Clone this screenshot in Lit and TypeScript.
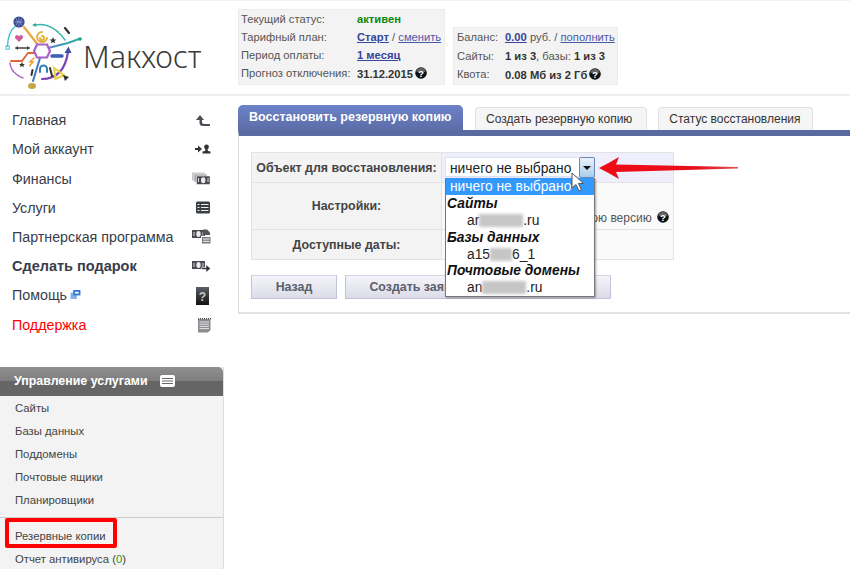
import { LitElement, html, css, svg } from "lit";
import { customElement } from "lit/decorators.js";

const bill = (x: number, y: number) => svg`<rect x="${x}" y="${y}" width="13" height="8" fill="#484b50"/><ellipse cx="${x + 6.5}" cy="${y + 4}" rx="2.2" ry="3" fill="#eee"/><path d="M${x + 2} ${y + 2} v4 M${x + 11} ${y + 2} v4" stroke="#ddd"/>`;

const navIcon = (name: string) => {
  const m: Record<string, unknown> = {
    home: svg`<path d="M5 8 L9 3 L13 8 H11 V10 Q11 12 13 12 H19 V14 H12 Q8.5 14 8.5 11 V8 Z" fill="#4a5058"/>`,
    acct: svg`<path d="M4 7 H7 V4.5 L11 8 L7 11.5 V9 H4 Z" fill="#333"/><circle cx="15.5" cy="6" r="2.4" fill="#333"/><path d="M14.5 8 H16.5 L17 10 L19.5 10.5 V12.5 H11.5 V10.5 L14 10 Z" fill="#333"/>`,
    money: svg`<rect x="1" y="2.5" width="13" height="8" fill="#c4c4c4"/><rect x="3" y="4" width="13" height="8" fill="#a8a8a8" stroke="#fff" stroke-width=".5"/><rect x="5.5" y="6" width="13.5" height="8.5" fill="#484b50" stroke="#fff" stroke-width=".5"/><ellipse cx="12.2" cy="10.2" rx="2.2" ry="3" fill="#eee"/><path d="M7.5 8 v4 M17 8 v4" stroke="#ddd"/>`,
    list: svg`<rect x="5" y="2.5" width="14" height="12" rx="1.5" fill="#3a3d42"/><path d="M10 5.5 H17.5 M10 8.5 H17.5 M10 11.5 H17.5 M6.5 5.5 H8.5 M6.5 8.5 H8.5 M6.5 11.5 H8.5" stroke="#eee" stroke-width="1.2"/>`,
    partner: svg`${bill(1, 2)}<path d="M12 1.5 H16 L19 4.5 V7 H12 Z" fill="#555"/><rect x="10" y="8" width="9.5" height="7.5" fill="#fff"/><rect x="11" y="9" width="8.5" height="6.5" fill="#777"/><path d="M12 11 H18.5 M12 13.3 H18.5" stroke="#fff"/>`,
    gift: svg`${bill(1, 3)}<path d="M10.5 9.5 H15 V6.5 L19.5 10.5 L15 14.5 V11.5 H10.5 Z" fill="#333" stroke="#fff" stroke-width=".6"/>`,
    help: svg`<defs><linearGradient id="hg" x1="0" y1="0" x2="0" y2="1"><stop offset="0" stop-color="#5c6066"/><stop offset="1" stop-color="#111"/></linearGradient></defs><rect x="5" y="0" width="13" height="18" fill="url(#hg)"/><text x="11.5" y="13.5" text-anchor="middle" class="q">?</text>`,
    note: svg`<path d="M7 3 H19.5 V14 L17 16.5 H7 Z" fill="#8a8c90"/><path d="M8.5 6 H18 M8.5 8.2 H18 M8.5 10.4 H18 M8.5 12.6 H18" stroke="#eee" stroke-width=".9"/><path d="M7 2.6 h13" stroke="#444" stroke-width="1.2" stroke-dasharray="1 1"/>`,
  };
  return html`<svg class="ni" width="20" height="17" viewBox="0 0 20 17">${m[name]}</svg>`;
};

const hint = html`<svg class="hint" width="12" height="12" viewBox="0 0 13 13"><circle cx="6.5" cy="6.5" r="6.3" fill="#111"/><path d="M1.5 5 A5 4 0 0 1 11.5 5 Q6.5 8 1.5 5 Z" fill="#666"/><text x="6.5" y="10.3" text-anchor="middle" fill="#fff" font-size="10" font-weight="700" font-family="Liberation Sans">?</text></svg>`;

const logo = html`<svg class="logo-mark" width="84" height="93" viewBox="0 0 84 93" fill="none" stroke-linecap="round">
  <defs>
    <linearGradient id="lg1" x1="0" y1="0" x2="1" y2="0"><stop offset="0" stop-color="#5b7fd0"/><stop offset="1" stop-color="#25b5a0"/></linearGradient>
  </defs>
  <path d="M15.5 25 Q8 31 7.5 45" stroke="#45bdd0" stroke-width="1.4"/>
  <rect x="6" y="45" width="3.2" height="3.2" stroke="#45bdd0"/>
  <circle cx="19" cy="21" r="5.6" fill="#39498f"/>
  <path d="M15 21 H23 M19 17 V25 M16.5 18 Q19 21 16.5 24 M21.5 18 Q19 21 21.5 24" stroke="#a9b6e0" stroke-width=".6"/>
  <path d="M24 26 L38 44" stroke="#efa43a" stroke-width="2.2"/>
  <path d="M35 24 Q52 21 65 39" stroke="#2fb3a8" stroke-width="1.5" stroke-dasharray="1.6 1.1"/>
  <path d="M32 24 L36 22 V26 Z" fill="#2fa8a0"/>
  <path d="M65 27 L69 32" stroke="#333" stroke-width="2.2"/>
  <path d="M47 37 A5 5 0 1 1 42 31 M42 35 A2 2 0 1 1 40 37 " stroke="#e3b23c" stroke-width="2"/>
  <path d="M53 36 L54 38.5 L56.5 38.5 L54.5 40 L55.2 42.5 L53 41 L50.8 42.5 L51.5 40 L49.5 38.5 L52 38.5 Z" fill="#333"/>
  <path d="M19 41 L15 37 Q15 34 17 34 Q18.5 34 19 35.5 Q19.5 34 21 34 Q23 34 23 37 Z" fill="#cf5aa0"/>
  <path d="M16 47 H29" stroke="#444" stroke-width="1.6"/>
  <path d="M15 47 L18 45 V49 Z M30 47 L27 45 V49 Z" fill="#444"/>
  <path d="M48 47 L68 42 L79 38" stroke="url(#lg1)" stroke-width="2"/>
  <circle cx="80" cy="38" r="1.8" fill="#1f9f8f"/>
  <path d="M37 52 H28 L22 60 H11" stroke="#e2653f" stroke-width="1.8"/>
  <path d="M10 62 Q11 72 23 77" stroke="#a764bd" stroke-width="1.5" stroke-dasharray="1.5 1.1"/>
  <path d="M52 55 H62" stroke="#3d5fb5" stroke-width="3.4" stroke-dasharray="2 1"/>
  <path d="M40 57 L33 80" stroke="#3f78c0" stroke-width="2"/>
  <ellipse cx="32" cy="85" rx="4" ry="3" fill="#c7a64a"/>
  <polygon points="37,43.5 47,43.5 50,50 47,56.5 37,56.5 34,50" fill="#fff" stroke="#a860c4" stroke-width="2.2"/>
  <path d="M42 78 Q64 78 68 51" stroke="#7a46b4" stroke-width="2.2"/>
  <path d="M64.5 52 L68.5 45.5 L71.5 52 Z" fill="#3d4f9f"/>
  <path d="M40 71 V68 A3.5 3.5 0 0 1 47 68 V71" stroke="#2f7fb8" stroke-width="2"/>
  <path d="M54 67 L64 74 L55.5 78 Z" stroke="#e8cf38" stroke-width="2"/>
  <path d="M50 67 L52 75 M32.5 69 L31.5 74" stroke="#333" stroke-width="2"/>
  <path d="M34 57 L30 61 H33 L29.5 65" stroke="#f2a32e" stroke-width="1.5"/>
  <path d="M22 61 l1 2 2 0 -1.6 1.3 .6 2 -2 -1.2 -2 1.2 .6 -2 -1.6 -1.3 2 0 Z" fill="#333"/>
  <path d="M63 74 L69 76 L65 80 Z" fill="#333"/>
</svg>`;

@customElement("app-root")
export class AppRoot extends LitElement {
  static styles = css`
    :host { display: block; width: 850px; height: 569px; overflow: hidden; position: relative; background: #fff;
      font-family: "Liberation Sans", Arial, sans-serif; color: #333; }
    a { color: #36459b; }
    .header { height: 96px; box-sizing: border-box; border-top: 1px solid #f2f2f2; border-bottom: 2px solid #efefef; display: flex; align-items: flex-start; }
    .logo { width: 238px; flex: none; display: flex; align-items: flex-start; box-sizing: border-box; height: 93px; }
    .logo-mark { flex: none; overflow: visible; filter: blur(.35px); }
    .logo-text { font-family: "Noto Sans", sans-serif; font-weight: 300; font-size: 30.6px; line-height: 36px; color: #3a3a3a; margin: 37px 0 0 -1px; }
    .info { background: #f3f3f3; border: 1px solid #ebebeb; font-size: 11.2px; color: #555; display: grid; box-sizing: border-box; white-space: nowrap; }
    .info1 { margin-top: 8px; width: 207px; height: 76px; grid-template-columns: 116px 1fr; padding-left: 2px; grid-auto-rows: 18px; align-items: center; }
    .info2 { margin: 26px 0 0 8px; width: 165px; height: 58px; grid-template-columns: 48px 1fr; padding-left: 3px; grid-auto-rows: 18.5px; align-items: center; }
    .info b { color: #333; }
    .info a { color: #4a58a8; }
    .info a.b { font-weight: 700; color: #36459b; }
    .green { color: #0a8a0a !important; }
    .hint { vertical-align: -1px; margin-left: 2px; }
    .body { display: flex; }
    .side { width: 224px; flex: none; }
    .nav { padding-top: 9.6px; }
    .nav-row { height: 29.2px; display: flex; align-items: center; justify-content: space-between; padding: 0 13px 0 12px; font-size: 14.25px; color: #383d4a; box-sizing: border-box; }
    .nav-row.bold { font-weight: 700; font-size: 14.5px; }
    .nav-row.red { color: #f00; }
    .ni { overflow: visible; flex: none; }
    .q { fill: #c8c8c8; font: 700 12px "Liberation Sans", sans-serif; }
    .ext { vertical-align: 1px; margin-left: 3px; }
    .svc { margin-top: 28.3px; background: #f3f3f3; border-right: 1px solid #ddd; height: 202px; }
    .svc-h { height: 29px; margin-bottom: 1px; border-radius: 0 5px 0 0; background: linear-gradient(#8f8f8f 0, #7e7e7e 50%, #656565 50%, #666 100%); color: #fff; font-weight: 700; font-size: 12.4px; display: flex; align-items: center; gap: 12px; padding: 0 0 1px 14px; box-sizing: border-box; }
    .svc-row { height: 23px; line-height: 23px; padding-left: 15px; font-size: 11.3px; color: #444; position: relative; }
    .svc-div { border-top: 1px solid #ccc; margin-top: 4.5px; padding-top: 7.5px; }
    .green2 { color: #2a9a2a; }
    .hl { position: absolute; left: 5px; top: -7px; width: 112px; height: 30px; box-sizing: border-box; border: 4px solid #f00; border-radius: 2px; }
    .main { flex: 1; padding: 9px 0 0 14px; min-width: 0; position: relative; }
    .tabs { display: flex; align-items: flex-end; gap: 11px; height: 25px; }
    .tab { height: 23px; box-sizing: border-box; border: 1px solid #e0e0e0; border-bottom: 0; border-radius: 4px 4px 0 0; background: #f5f5f5; font-size: 12px; color: #333; display: flex; align-items: center; padding: 0 14px 0 10px; white-space: nowrap; }
    .tab:last-child { padding-right: 12px; }
    .tab.on { height: 25px; width: 225px; margin-right: 1px; border: 0; border-radius: 5px 5px 0 0; background: linear-gradient(#6c82c8, #5c6da8); color: #fff; font-weight: 700; padding: 0 0 2px 11px; font-size: 12.5px; }
    .panel { border-top: 6px solid #586aa0; border-left: 1px solid #ddd; border-bottom: 2px solid #e3e3e3; height: 184px; box-sizing: border-box; padding: 16px 0 0 12px; }
    .tbl { width: 423px; display: grid; grid-template-columns: 189px 1fr; grid-template-rows: 29px 46px 29px; gap: 1px; background: #e3e3e3; border: 1px solid #e3e3e3; box-sizing: border-box; height: 108px; }
    .lab { background: #f3f3f3; font-weight: 700; font-size: 12.4px; color: #444; display: flex; align-items: center; justify-content: center; white-space: nowrap; }
    .val { background: #fafafa; font-size: 12px; color: #555; position: relative; }
    .val.first { background: #eeeefc; }
    .keep { position: absolute; right: 4px; bottom: 4px; white-space: nowrap; }
    .sel { position: absolute; left: 3px; top: 4px; width: 150px; height: 20px; background: #fff; border: 1px solid #dde1ee; box-sizing: border-box; font-size: 13.8px; line-height: 21px; padding-left: 4px; color: #222; white-space: nowrap; }
    .sel-btn { position: absolute; right: -1px; top: -1px; width: 16px; height: 21px; box-sizing: border-box; border: 1px solid #6d87b8; border-radius: 2px; background: linear-gradient(#eaf3fb, #a9cdea); display: flex; align-items: center; justify-content: center; }
    .tri { width: 0; height: 0; border: 4px solid transparent; border-top: 4px solid #111; border-bottom: 0; }
    .btns { display: flex; gap: 8px; margin-top: 15px; }
    .btn { height: 24px; box-sizing: border-box; border: 1px solid #bfc3dc; border-top-color: #d4d6e6; background: linear-gradient(#f4f4fa, #dcdce8); font-weight: 700; font-size: 12.4px; color: #5a5f6e; display: flex; align-items: center; justify-content: center; white-space: nowrap; }
    .b1 { width: 86px; }
    .b2 { width: 266px; }
    .drop { position: absolute; left: 221px; top: 82px; width: 150px; height: 119px; box-sizing: border-box; padding-top: .8px; background: #fff; border: 1px solid #777; border-top: 0; box-shadow: 1px 1px 2px rgba(0,0,0,.35); font-size: 13.8px; color: #222; line-height: 18.5px; }
    .opt { height: 16.7px; white-space: nowrap; }
    .opt.on { background: #3399ff; color: #fff; padding-left: 4px; margin-top: -.8px; height: 16.7px; margin-bottom: .8px; line-height: 18px; }
    .group { font-weight: 700; font-style: italic; padding-left: 1px; color: #111; }
    .sub { padding-left: 21px; }
    .blur { display: inline-block; height: 13px; background: #c6c6c6; filter: blur(1.5px); vertical-align: -2px; }
    .arrow { position: absolute; left: 373px; top: 55px; }
    .cursor { position: absolute; left: 347px; top: 76px; }
  `;

  render() {
    const nav: [string, string, string?][] = [
      ["Главная", "home"], ["Мой аккаунт", "acct"], ["Финансы", "money"], ["Услуги", "list"],
      ["Партнерская программа", "partner"], ["Сделать подарок", "gift", "bold"], ["Помощь", "help"], ["Поддержка", "note", "red"],
    ];
    return html`
      <div class="header">
        <div class="logo">${logo}<span class="logo-text">Макхост</span></div>
        <div class="info info1">
          <span>Текущий статус:</span><b class="green">активен</b>
          <span>Тарифный план:</span><span><a class="b" href="#">Старт</a> / <a href="#">сменить</a></span>
          <span>Период оплаты:</span><span><a class="b" href="#">1 месяц</a></span>
          <span>Прогноз отключения:</span><span><b>31.12.2015</b>${hint}</span>
        </div>
        <div class="info info2">
          <span>Баланс:</span><span><a class="b" href="#">0.00</a> руб. / <a href="#">пополнить</a></span>
          <span>Сайты:</span><span><b>1 из 3</b>, базы: <b>1 из 3</b></span>
          <span>Квота:</span><span><b>0.08 Мб из 2 Гб</b>${hint}</span>
        </div>
      </div>
      <div class="body">
        <div class="side">
          <div class="nav">
            ${nav.map(([t, i, c]) => html`<div class="nav-row ${c ?? ""}">
              <span>${t}${t === "Помощь" ? html`<svg class="ext" width="11" height="9" viewBox="0 0 11 10"><rect x="0" y="3" width="7" height="7" fill="#7fb2ea"/><rect x="3" y="0" width="8" height="6" fill="#2f78d0"/><rect x="5" y="2" width="4" height="2" fill="#fff"/></svg>` : ""}</span>
              ${navIcon(i)}
            </div>`)}
          </div>
          <div class="svc">
            <div class="svc-h">Управление услугами <svg width="15" height="12" viewBox="0 0 15 12"><rect width="15" height="12" rx="2" fill="#fff"/><path d="M2 3.5 H13 M2 6 H13 M2 8.5 H13" stroke="#666"/></svg></div>
            ${["Сайты", "Базы данных", "Поддомены", "Почтовые ящики", "Планировщики"].map((s) => html`<div class="svc-row">${s}</div>`)}
            <div class="svc-div">
              <div class="svc-row">Резервные копии<span class="hl"></span></div>
              <div class="svc-row">Отчет антивируса (<span class="green2">0</span>)</div>
            </div>
          </div>
        </div>
        <div class="main">
          <div class="tabs">
            <div class="tab on">Восстановить резервную копию</div>
            <div class="tab">Создать резервную копию</div>
            <div class="tab">Статус восстановления</div>
          </div>
          <div class="panel">
            <div class="tbl">
              <div class="lab">Объект для восстановления:</div>
              <div class="val first"><div class="sel">ничего не выбрано<span class="sel-btn"><span class="tri"></span></span></div></div>
              <div class="lab">Настройки:</div>
              <div class="val"><span class="keep">последнюю версию ${hint}</span></div>
              <div class="lab">Доступные даты:</div>
              <div class="val"></div>
            </div>
            <div class="btns">
              <div class="btn b1">Назад</div>
              <div class="btn b2">Создать заявку на восстановление</div>
            </div>
          </div>
          <div class="drop">
            <div class="opt on">ничего не выбрано</div>
            <div class="opt group">Сайты</div>
            <div class="opt sub">ar<span class="blur" style="width:44px"></span>.ru</div>
            <div class="opt group">Базы данных</div>
            <div class="opt sub">a15<span class="blur" style="width:22px"></span>6_1</div>
            <div class="opt group">Почтовые домены</div>
            <div class="opt sub">an<span class="blur" style="width:44px"></span>.ru</div>
          </div>
          <svg class="arrow" width="150" height="34" viewBox="0 0 150 34">
            <defs><linearGradient id="ag" x1="0" y1="0" x2="1" y2="0"><stop offset="0" stop-color="#ee0a14"/><stop offset=".7" stop-color="#e8101c"/><stop offset="1" stop-color="#e0505a"/></linearGradient></defs>
            <path d="M2 17 Q12 12 22 6 L19 13.5 L141 16 L141 17.5 L19 21 L22 28 Q12 22 2 17 Z" fill="url(#ag)"/>
          </svg>
          <svg class="cursor" width="14" height="20" viewBox="0 0 14 20">
            <path d="M1 1 V16 L5 12.5 L8 19 L10.5 18 L7.5 11.5 L12.5 11.5 Z" fill="#fff" stroke="#555" stroke-width="1"/>
          </svg>
        </div>
      </div>
    `;
  }
}
